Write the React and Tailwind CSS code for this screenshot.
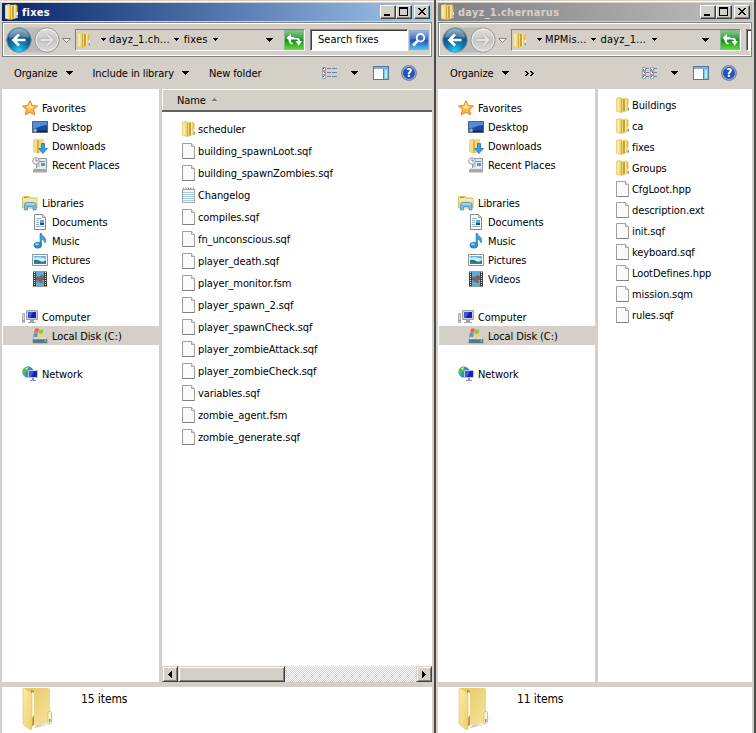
const FAVORITES = [
  { icon: StarIcon, label: "Favorites", root: true },
  { icon: DesktopIcon, label: "Desktop" },
  { icon: DownloadsIcon, label: "Downloads" },
  { icon: RecentIcon, label: "Recent Places" },
];

const LIBRARIES = [
  { icon: LibrariesIcon, label: "Libraries", root: true },
  { icon: DocumentIcon, label: "Documents" },
  { icon: MusicIcon, label: "Music" },
  { icon: PictureIcon, label: "Pictures" },
  { icon: VideoIcon, label: "Videos" },
];

const COMPUTER = [
  { icon: ComputerIcon, label: "Computer", root: true },
  { icon: DiskIcon, label: "Local Disk (C:)", active: true },
];

const NETWORK = [{ icon: NetworkIcon, label: "Network", root: true }];

const FIXES_FILES = [
  "scheduler",
  "building_spawnLoot.sqf",
  "building_spawnZombies.sqf",
  "Changelog",
  "compiles.sqf",
  "fn_unconscious.sqf",
  "player_death.sqf",
  "player_monitor.fsm",
  "player_spawn_2.sqf",
  "player_spawnCheck.sqf",
  "player_zombieAttack.sqf",
  "player_zombieCheck.sqf",
  "variables.sqf",
  "zombie_agent.fsm",
  "zombie_generate.sqf",
];

const MISSION_FILES = [
  "Buildings",
  "ca",
  "fixes",
  "Groups",
  "CfgLoot.hpp",
  "description.ext",
  "init.sqf",
  "keyboard.sqf",
  "LootDefines.hpp",
  "mission.sqm",
  "rules.sqf",
];

function FolderIcon() {
  return (
    <svg width="16" height="16" viewBox="0 0 16 16" className="shrink-0">
      <path d="M0 1 4 0l2 1v14l-2 .8L0 14.500Z" fill="#edd47a" />
      <path d="M1 2h2.500v12H1Z" fill="#f8e9a4" />
      <path d="M5 1.500h1.500v14L5 15.800Z" fill="#cfae45" />
      <path d="M6 1l5-.5 1 1V14l-5 1.500H6Z" fill="#efd676" />
      <path d="M7 2h2v12l-2 .8Z" fill="#c6a237" />
      <path d="M9 2h1v12H9Z" fill="#f9eaa8" />
      <path d="M11 2h1.500v6H13v6h-2Z" fill="#dcbb50" />
      <path d="M11.500 8h1.500v6h-1.500Z" fill="#f9f3cf" />
      <path d="M11.600 11H13v2.500h-1.400Z" fill="#4ea6dc" />
    </svg>
  );
}

function FileIcon() {
  return (
    <svg width="16" height="16" viewBox="0 0 16 16" className="shrink-0">
      <path d="M.5.500h9l3 3v12H.5Z" fill="#fafafa" stroke="#a0a0a0" />
      <path d="M.5 15.500h12" stroke="#808080" />
      <path d="M9.500.5v3h3" fill="#e6e6e6" stroke="#a8a8a8" />
    </svg>
  );
}

function NotepadIcon() {
  return (
    <svg width="16" height="16" viewBox="0 0 16 16" className="shrink-0">
      <path d="M.5 2.500h12v13H.5Z" fill="#f4f8fb" stroke="#a3a8ac" />
      <path d="M1 5.500h11M1 7.500h11M1 9.500h11M1 11.500h11M1 13.500h11" stroke="#a9cbe0" />
      <path d="M1 .5l1 2M3.500.5l1 2M6 .5l1 2M8.500.5l1 2M11 .5l1 2" stroke="#8c8c8c" />
    </svg>
  );
}

function StarIcon() {
  return (
    <svg width="16" height="16" viewBox="0 0 16 16" className="shrink-0">
      <path d="M8 .7 10.200 5.500l5.300.5-4 3.500 1.200 5.400L8 12.100l-4.700 2.800 1.200-5.400L.5 6l5.300-.5Z" fill="#fcb93c" stroke="#e4802a" strokeLinejoin="round" />
      <path d="M8 2.500 9.500 6.300l3.500.4-5 2.300-4-2.400 2.400-.3Z" fill="#ffe58c" />
    </svg>
  );
}

function DesktopIcon() {
  return (
    <svg width="16" height="16" viewBox="0 0 16 16" className="shrink-0">
      <path d="M.5 2.500h15v11H.5Z" fill="#2358b4" stroke="#50617c" />
      <path d="M1 3h14v3L1 9.500Z" fill="#4f8edb" />
      <path d="M1 10c5 0 8-4 14-4v5.500H1Z" fill="#2148a0" />
      <path d="M1 11.500h14V13H1Z" fill="#18253d" />
      <circle cx="3" cy="11.500" r="1.900" fill="#58b6ed" />
      <path d="M2 10h1v1.500H2Z" fill="#f07a3a" />
      <path d="M3 10h1v1.500H3Z" fill="#9ada57" />
    </svg>
  );
}

function DownloadsIcon() {
  return (
    <svg width="16" height="16" viewBox="0 0 16 16" className="shrink-0">
      <path d="M1 1.500 5 .5l2 1.500v13l-2 .5L1 14Z" fill="#f3dc86" />
      <path d="M5 2h2v13H5Z" fill="#d6b547" />
      <path d="M7 1h5v13l-5 1Z" fill="#f1d97e" />
      <path d="M9.500 5.500h3v5h2.800L11 15.500 6.800 10.500h2.700Z" fill="#3b9de4" stroke="#1c6fb7" strokeWidth=".8" />
    </svg>
  );
}

function RecentIcon() {
  return (
    <svg width="16" height="16" viewBox="0 0 16 16" className="shrink-0">
      <path d="M4.500 1.500h10v10h-10Z" fill="#e3eaf0" stroke="#8e979e" />
      <path d="M7 4h6v1H7ZM9 6h4v3H9Z" fill="#4c9bd2" />
      <path d="M5 7h3M5 9h3" stroke="#9fb3c2" />
      <path d="m3 11-2 2v2.500h14V13l-1-2Z" fill="#a3a8ac" />
      <path d="M3 11.500h11" stroke="#e7e9ea" />
      <circle cx="4" cy="4" r="3.300" fill="#f8f8f8" stroke="#9a9a9a" />
      <path d="M4 2v2h2" fill="none" stroke="#666" strokeWidth=".8" />
    </svg>
  );
}

function LibrariesIcon() {
  return (
    <svg width="16" height="16" viewBox="0 0 16 16" className="shrink-0">
      <path d="M.5 2.500 1.500 1.500h6l1 1.500h6.500v10H.5Z" fill="#f3df8d" stroke="#cfae4b" strokeWidth=".8" />
      <path d="M2 2.500h4" stroke="#7cbc4c" />
      <path d="M1 5h14" stroke="#fff6c8" />
      <path d="M2.500 15V10q0-2.500 2.500-2.500h6.500q2.500 0 2.500 2.500v5h-3v-3.500h-5.500V15Z" fill="#73bde8" stroke="#3f8dc0" strokeWidth=".7" />
      <path d="M4 9h9" stroke="#c6e8fa" />
    </svg>
  );
}

function DocumentIcon() {
  return (
    <svg width="16" height="16" viewBox="0 0 16 16" className="shrink-0">
      <path d="M2.500.5h8l3 3v12h-11Z" fill="#fdfdfd" stroke="#85898d" />
      <path d="M10.500.5v3h3" fill="#ddd" stroke="#999" />
      <path d="M4 4.500h5M4 6.500h3M4 8.500h3M4 10.500h3M4 12.500h8" stroke="#99b1c5" />
      <path d="M8 6h4v3H8Z" fill="#5fa8dc" />
      <path d="M8 9h4v2H8Z" fill="#205077" />
    </svg>
  );
}

function MusicIcon() {
  return (
    <svg width="16" height="16" viewBox="0 0 16 16" className="shrink-0">
      <path d="M8 .5h1.500q.3 2 2.500 3.300Q15 6 13 10q-.5-3-3.500-4v6.500H8Z" fill="#3da1dc" stroke="#247ab2" strokeWidth=".6" />
      <ellipse cx="5.800" cy="12.200" rx="3.900" ry="3" fill="#2f91d5" stroke="#1e6ca8" strokeWidth=".6" />
      <ellipse cx="5" cy="11.300" rx="2" ry="1" fill="#94d3f6" />
    </svg>
  );
}

function PictureIcon() {
  return (
    <svg width="16" height="16" viewBox="0 0 16 16" className="shrink-0">
      <path d="M.5 2.500h15v11H.5Z" fill="#fff" stroke="#8b9299" />
      <path d="M2 4h12v8H2Z" fill="#66b7e6" />
      <path d="M2 6q5-2 12 1v3H2Z" fill="#d5effa" />
      <path d="M2 8q3-1 6 1t6-1v4H2Z" fill="#2b7770" />
      <path d="M2 10.500h12V12H2Z" fill="#2687b5" />
    </svg>
  );
}

function VideoIcon() {
  return (
    <svg width="16" height="16" viewBox="0 0 16 16" className="shrink-0">
      <path d="M1 .5h14v15H1Z" fill="#313438" />
      <path d="M4 1h8v6.500H4ZM4 8.500h8V15H4Z" fill="#5aabe2" />
      <path d="m4 7.500 1-2.500 2 1 2-2 3 1v2.500ZM4 10l3-1h3l1 2-2 1-2-1Z" fill="#9a5a3c" />
      <path d="M2.500 1v14M13.500 1v14" stroke="#eee" strokeWidth="1.200" strokeDasharray="1 1" />
    </svg>
  );
}

function ComputerIcon() {
  return (
    <svg width="16" height="16" viewBox="0 0 16 16" className="shrink-0">
      <path d="M.5 4.500h2v9h-2Z" fill="#d8dadb" stroke="#969ca0" strokeWidth=".8" />
      <path d="M1 11h1v1H1Z" fill="#49b549" />
      <path d="M4.500 1.500h11v9h-11Z" fill="#cdd1d4" stroke="#9da2a6" />
      <path d="M6 3h8v6H6Z" fill="#1220b8" />
      <path d="M6 3h5L8 9H6Z" fill="#3e58dc" />
      <path d="M8 11h4v2h2v1H6v-1h2Z" fill="#a2a7ab" />
    </svg>
  );
}

function DiskIcon() {
  return (
    <svg width="16" height="16" viewBox="0 0 16 16" className="shrink-0">
      <path d="m2 9-1.500 2v4.500h15V11L14 9Z" fill="#9ca4aa" />
      <path d="m2.500 9-1.500 2h14l-1.500-2Z" fill="#d5dadd" />
      <path d="M1 11.500h14V15H1Z" fill="#63747e" />
      <path d="M2 12.500h9v1H2Z" fill="#347c96" />
      <path d="M12.500 12h1.500v2h-1.500Z" fill="#50e450" />
      <path d="M3 1q2-1.500 4 0L6 5Q4 3.800 2 5Z" fill="#ef6433" />
      <path d="M7.500 1.300q2 1.200 4 0l-1 4q-2 1-4 0Z" fill="#85c93b" />
      <path d="M1.800 5.600q2-1.400 4 0L5 9.200q-2-1-4 0Z" fill="#4797e3" />
      <path d="M6.300 5.900q2 1.100 4 0l-1 3.700q-2 1-4 0Z" fill="#fbd24c" />
    </svg>
  );
}

function NetworkIcon() {
  return (
    <svg width="16" height="16" viewBox="0 0 16 16" className="shrink-0">
      <circle cx="6" cy="6" r="5.600" fill="#2b8be0" />
      <path d="M1 4q2-4 6-3.500L6 3l1 2-3 1-1 4Q0 8 1 4Z" fill="#4fc143" />
      <path d="M3 2.500 6 1 5 4Z" fill="#c9f2b8" />
      <path d="M6.500 4.500h9v7h-9Z" fill="#1224ba" stroke="#c3c9cd" />
      <path d="M7 5h5l-3 6H7Z" fill="#3c5ce0" />
      <path d="M10 12h2v2h2v1H8v-1h2Z" fill="#8997a3" />
    </svg>
  );
}

function BigFolderIcon() {
  return (
    <svg width="44" height="46" viewBox="0 0 44 46" className="shrink-0">
      <defs>
        <linearGradient id="leaf" x1="0" y1="0" x2="1" y2="1">
          <stop offset="0" stopColor="#fbecA6" />
          <stop offset="1" stopColor="#ecd070" />
        </linearGradient>
        <linearGradient id="body" x1="0" y1="0" x2="1" y2="1">
          <stop offset="0" stopColor="#e6c766" />
          <stop offset="1" stopColor="#f6e39a" />
        </linearGradient>
        <linearGradient id="cast" x1="0" y1="0" x2="1" y2="0">
          <stop offset="0" stopColor="#8a8a8a" />
          <stop offset="1" stopColor="#ffffff" stopOpacity="0" />
        </linearGradient>
      </defs>
      <path d="M12 41 28 24l10 9q2 3-5 4Z" fill="url(#cast)" opacity=".6" />
      <path d="M3 1h23q2 0 2 2v32L11 38.500 3 36Z" fill="url(#body)" />
      <path d="M9 2.500 12 4v34l-3 2Z" fill="#b8963c" />
      <path d="m10 5 2 1v22l-2 3Z" fill="#fffdf0" />
      <path d="M1 1.500Q1 .8 2 1.200L8.500 5q1.500 1 1.500 2.500V41q0 2.500-2 1.500L2.500 38.500Q1 37.500 1 36Z" fill="url(#leaf)" stroke="#dfc163" strokeWidth=".6" />
      <path d="M26 25q2.500-2 3.500 0v10q-1 2-3.500 1.500Z" fill="#fdf8dc" stroke="#dfbf59" />
      <path d="M27 32h1.500v3H27Z" fill="#46a2dd" />
    </svg>
  );
}

function DownArrow({ small }) {
  return small ? (
    <svg width="5" height="3" viewBox="0 0 5 3" className="shrink-0" shapeRendering="crispEdges">
      <path d="M0 0h5v1H4v1H3v1H2V2H1V1H0Z" />
    </svg>
  ) : (
    <svg width="7" height="4" viewBox="0 0 7 4" className="shrink-0" shapeRendering="crispEdges">
      <path d="M0 0h7v1H6v1H5v1H4v1H3V3H2V2H1V1H0Z" />
    </svg>
  );
}

function NavButtons() {
  return (
    <svg width="66" height="28" viewBox="0 0 66 28" className="shrink-0">
      <defs>
        <radialGradient id="back" cx=".5" cy=".95" r=".9">
          <stop offset="0" stopColor="#22d4fa" />
          <stop offset=".4" stopColor="#1179ae" />
          <stop offset=".75" stopColor="#13507c" />
          <stop offset="1" stopColor="#6d9dba" />
        </radialGradient>
        <linearGradient id="fwd" x1="0" y1="0" x2="0" y2="1">
          <stop offset="0" stopColor="#e4e3e0" />
          <stop offset=".5" stopColor="#c6c5c2" />
          <stop offset="1" stopColor="#dedddb" />
        </linearGradient>
      </defs>
      <path d="M14 1.500h28a12.500 12.500 0 0 1 0 25H14Z" fill="#bdbbb7" />
      <circle cx="14" cy="14" r="12.300" fill="url(#back)" stroke="#7b8d98" />
      <path d="M4 12a10 9 0 0 1 20 0q-10-3-20 0Z" fill="#fff" opacity=".3" />
      <path d="M20.500 14H9M14 8.500 8.500 14l5.500 5.500" fill="none" stroke="#fff" strokeWidth="2.700" />
      <circle cx="42" cy="14" r="12.200" fill="url(#fwd)" stroke="#969593" />
      <circle cx="42" cy="14" r="11" fill="none" stroke="#efeeec" />
      <path d="M35.500 14H47M42 8.500l5.500 5.500-5.500 5.500" fill="none" stroke="#b4b3b0" strokeWidth="3.600" />
      <path d="M35.500 14H47M42 8.500l5.500 5.500-5.500 5.500" fill="none" stroke="#e6e5e3" strokeWidth="2" />
      <path d="M57.500 12.500h8l-4 4Z" fill="#f4f4f4" stroke="#858585" />
    </svg>
  );
}

function RefreshButton() {
  return (
    <svg width="20" height="20" viewBox="0 0 20 20" className="shrink-0">
      <defs>
        <linearGradient id="green" x1="0" y1="0" x2="0" y2="1">
          <stop offset="0" stopColor="#86c98a" />
          <stop offset=".45" stopColor="#2f9a3a" />
          <stop offset=".5" stopColor="#118c1c" />
          <stop offset="1" stopColor="#5fdc3c" />
        </linearGradient>
      </defs>
      <path d="M.5.5h19v19H.5Z" fill="url(#green)" stroke="#88b78c" />
      <path d="M7 4v3h3.500l-1 2.500H7V12L2.500 8Z" fill="#fff" />
      <path d="M6 9.500q0 3 3 3.500l-1 1.500Q4.500 13 4.500 9.500Z" fill="#fff" />
      <path d="M10 8h3.500q2.500 0 2.500 3h2l-3.300 4.800L11.500 11H14q0-1.500-1.500-1.500H10Z" fill="#fff" />
    </svg>
  );
}

function SearchButton() {
  return (
    <svg width="20" height="20" viewBox="0 0 20 20" className="shrink-0">
      <defs>
        <linearGradient id="blue" x1="0" y1="0" x2="0" y2="1">
          <stop offset="0" stopColor="#9db9e4" />
          <stop offset=".45" stopColor="#3f6fc4" />
          <stop offset=".5" stopColor="#1f51b4" />
          <stop offset="1" stopColor="#43c6f6" />
        </linearGradient>
      </defs>
      <path d="M.5.5h19v19H.5Z" fill="url(#blue)" stroke="#8fa8cd" />
      <circle cx="11.500" cy="7.800" r="3.800" fill="#3e74cc" stroke="#fff" strokeWidth="1.800" />
      <path d="m8.500 11-4.500 4.500" stroke="#fff" strokeWidth="2.600" />
    </svg>
  );
}

function ViewIcon({ list }) {
  return (
    <svg width="16" height="13" viewBox="0 0 16 13" className="shrink-0" shapeRendering="crispEdges">
      <path d="M0 0h4v12H0Z" fill="#8fa3b8" />
      <path d="M1 1h2v2H1ZM1 5h2v2H1ZM1 9h2v2H1Z" fill="#fff" />
      {list ? (
        <>
          <path d="M8 0h4v12H8Z" fill="#8fa3b8" />
          <path d="M9 1h2v2H9ZM9 5h2v2H9ZM9 9h2v2H9Z" fill="#fff" />
          <path d="M4 1h3v1H4ZM4 5h3v1H4ZM4 9h3v1H4ZM12 1h3v1h-3ZM12 5h3v1h-3ZM12 9h3v1h-3Z" fill="#6f8299" />
          <path d="M1 2h1v1H1ZM9 2h1v1H9Z" fill="#2f9a45" />
          <path d="M2 5h1v1H2ZM10 5h1v1h-1Z" fill="#d22" />
          <path d="M1 9h1v1H1ZM9 9h1v1H9Z" fill="#2b55c0" />
        </>
      ) : (
        <>
          <path d="M1 1h1v1H1ZM1 9h1v1H1Z" fill="#4d6f9f" />
          <path d="M2 5h1v1H2Z" fill="#d22" />
          <path d="M5 1h4v1H5ZM10 1h5v1h-5ZM5 5h4v1H5ZM10 5h5v1h-5ZM5 9h4v1H5ZM10 9h5v1h-5Z" fill="#6f8299" />
        </>
      )}
    </svg>
  );
}

function PreviewIcon() {
  return (
    <svg width="16" height="14" viewBox="0 0 16 14" className="shrink-0" shapeRendering="crispEdges">
      <path d="M.5.5h15v13H.5Z" fill="#fff" stroke="#53789f" />
      <path d="M1 1h14v2H1Z" fill="#8badcf" />
      <path d="M10 3h5v10h-5Z" fill="#7dcbe8" />
      <path d="M10.500 3v10" stroke="#4b86ab" />
      <path d="M12 4h2v8h-2Z" fill="#b8e6f5" />
    </svg>
  );
}

function HelpIcon() {
  return (
    <span className="flex size-4 shrink-0 items-center justify-center rounded-full border border-[#7d8aa8] bg-[#2850b4] text-[12px] font-bold leading-none text-white shadow-[inset_0_0_0_1px_#a3b5dd]">
      ?
    </span>
  );
}

function CaptionButton({ children, className = "" }) {
  return (
    <span
      className={`flex h-[14px] w-4 border border-t-white border-l-white border-r-[#404040] border-b-[#404040] bg-[#d4d0c8] shadow-[inset_-1px_-1px_0_#808080] ${className}`}
    >
      <svg width="14" height="12" viewBox="0 0 14 12" shapeRendering="crispEdges">
        {children}
      </svg>
    </span>
  );
}

function TitleBar({ title, active }) {
  return (
    <div
      className={`flex h-[18px] items-center bg-linear-to-r pr-[2px] ${
        active ? "from-[#0a246a] to-[#a6caf0] text-white" : "from-[#808080] to-[#c0c0c0] text-[#d4d0c8]"
      }`}
    >
      <span className="ml-[3px] flex">
        <FolderIcon />
      </span>
      <span className="ml-px flex-1 pt-px text-[11px] font-bold tracking-[0.25px]">{title}</span>
      <CaptionButton>
        <path d="M3 8h6v2H3Z" />
      </CaptionButton>
      <CaptionButton>
        <path d="M2 1h9v9H2ZM3 3v6h7V3Z" fillRule="evenodd" />
      </CaptionButton>
      <CaptionButton className="ml-[2px]">
        <path d="M3 2h2v1h1v1h2V3h1V2h2v1h-1v1H9v1H8v1h1v1h1v1h1v1H9V8H8V7H6v1H5v1H3V8h1V7h1V6h1V5H5V4H4V3H3Z" />
      </CaptionButton>
    </div>
  );
}

function AddressBar({ first, second, search }) {
  return (
    <div className="mt-px flex h-[35px] items-center overflow-hidden border border-[#808080] shadow-[inset_1px_1px_0_#fff,inset_-1px_-1px_0_#fff]">
      <span className="ml-[2px] flex">
        <NavButtons />
      </span>
      <div className="ml-1 flex h-[22px] w-[230px] shrink-0 items-center border border-[#808080] border-r-white border-b-white tracking-[0.15px]">
        <span className="ml-px flex">
          <FolderIcon />
        </span>
        <span className="ml-2">
          <DownArrow small />
        </span>
        <span className="ml-[3px]">{first}</span>
        <span className="ml-1">
          <DownArrow small />
        </span>
        <span className="ml-[5px]">{second}</span>
        <span className="ml-[6px]">
          <DownArrow small />
        </span>
        <span className="ml-auto mr-[11px]">
          <DownArrow />
        </span>
        <RefreshButton />
      </div>
      <div className="ml-[5px] flex h-[22px] w-[98px] shrink-0 items-center border border-[#808080] border-r-white border-b-white bg-white pl-[7px] tracking-[0.05px] shadow-[inset_1px_1px_0_#404040]">
        <span className="pt-px">{search}</span>
      </div>
      <span className="ml-px flex">
        <SearchButton />
      </span>
    </div>
  );
}

function NavGroup({ items }) {
  return (
    <ul className="mb-[19px]">
      {items.map(({ icon: Icon, label, root, active }) => (
        <li
          key={label}
          className={`ml-px flex h-[19px] items-center gap-1 ${root ? "pl-[19px]" : "pl-[29px]"} ${
            active ? "bg-[#d4d0c8]" : ""
          }`}
        >
          <Icon />
          <span className="pt-[2px]">{label}</span>
        </li>
      ))}
    </ul>
  );
}

function FileRow({ name, className }) {
  const Icon = name === "Changelog" ? NotepadIcon : name.includes(".") ? FileIcon : FolderIcon;
  return (
    <li className={`flex items-center ${className}`}>
      <Icon />
      <span className="pt-[2px]">{name}</span>
    </li>
  );
}

function ScrollButton({ children, className = "" }) {
  return (
    <span
      className={`flex h-4 shrink-0 items-center justify-center border border-t-[#d4d0c8] border-l-[#d4d0c8] border-r-[#404040] border-b-[#404040] bg-[#d4d0c8] shadow-[inset_1px_1px_0_#fff,inset_-1px_-1px_0_#808080] ${className}`}
    >
      {children}
    </span>
  );
}

function ScrollBar() {
  return (
    <div className="mt-auto flex bg-[repeating-conic-gradient(#d4d0c8_0_25%,#fff_0_50%)] bg-[length:2px_2px]">
      <ScrollButton className="w-4">
        <svg width="4" height="7" viewBox="0 0 4 7" shapeRendering="crispEdges">
          <path d="M4 0v7H3V6H2V5H1V4H0V3h1V2h1V1h1V0Z" />
        </svg>
      </ScrollButton>
      <ScrollButton className="w-[107px]" />
      <ScrollButton className="ml-auto w-4">
        <svg width="4" height="7" viewBox="0 0 4 7" shapeRendering="crispEdges">
          <path d="M0 0v7h1V6h1V5h1V4h1V3H3V2H2V1H1V0Z" />
        </svg>
      </ScrollButton>
    </div>
  );
}

function ExplorerWindow({ title, active, address, toolbar, list, children, count, className }) {
  return (
    <section className={`flex flex-col border-r-2 border-[#4a4a4a] bg-[#d4d0c8] pl-[2px] pr-[2px] ${className}`}>
      <div className="-mx-[2px] mt-px mb-px h-px bg-white" />
      <TitleBar title={title} active={active} />
      {address}
      <div className="flex h-8 items-center pl-3">
        <span className="pt-px">Organize</span>
        <span className="ml-2">
          <DownArrow />
        </span>
        {toolbar}
        <span className="ml-auto">
          <ViewIcon list={list} />
        </span>
        <span className="ml-[13px]">
          <DownArrow />
        </span>
        <span className="ml-[15px]">
          <PreviewIcon />
        </span>
        <span className="ml-3 mr-[15px]">
          <HelpIcon />
        </span>
      </div>
      <div className="flex h-[593px] gap-[3px]">
        <nav className="w-[157px] shrink-0 bg-white pt-[9px]">
          <NavGroup items={FAVORITES} />
          <NavGroup items={LIBRARIES} />
          <NavGroup items={COMPUTER} />
          <NavGroup items={NETWORK} />
        </nav>
        <div className="flex min-w-0 flex-1 flex-col bg-white">{children}</div>
      </div>
      <footer className="mt-[5px] flex h-[46px] bg-white pl-5">
        <BigFolderIcon />
        <span className="ml-[15px] mt-[5px] text-[12px]">{count}</span>
      </footer>
    </section>
  );
}

export default function App() {
  return (
    <main className="flex h-[733px] w-[756px] overflow-hidden whitespace-nowrap bg-[#d4d0c8] font-['DejaVu_Sans_Condensed','DejaVu_Sans',sans-serif] text-[11px] leading-[14px] tracking-[-0.1px] text-black [font-stretch:condensed] [&_span>svg]:block">
      <ExplorerWindow
        className="w-[436px]"
        title="fixes"
        active
        count="15 items"
        address={<AddressBar first="dayz_1.ch..." second="fixes" search="Search fixes" />}
        toolbar={
          <>
            <span className="ml-5 pt-px">Include in library</span>
            <span className="ml-2">
              <DownArrow />
            </span>
            <span className="ml-5 pt-px">New folder</span>
          </>
        }
      >
        <div className="flex h-[23px] items-center border-b-2 border-[#606060] bg-[#d4d0c8] pl-[15px] pt-[2px] shadow-[inset_1px_1px_0_#fff]">
          Name
          <svg width="5" height="3" viewBox="0 0 5 3" className="mb-[3px] ml-[6px]" shapeRendering="crispEdges">
            <path d="M2 0h1v1h1v1h1v1H0V2h1V1h1Z" fill="#808080" />
          </svg>
        </div>
        <ul className="pl-5 pt-[6px]">
          {FIXES_FILES.map((name) => (
            <FileRow key={name} name={name} className="h-[22px]" />
          ))}
        </ul>
        <ScrollBar />
      </ExplorerWindow>
      <ExplorerWindow
        className="w-[320px]"
        title="dayz_1.chernarus"
        list
        count="11 items"
        address={<AddressBar first="MPMis..." second="dayz_1..." />}
        toolbar={
          <svg width="9" height="5" viewBox="0 0 9 5" className="ml-4" shapeRendering="crispEdges">
            <path d="M0 0h2v1h1v1h1v1H3v1H2v1H0V4h1V3h1V2H1V1H0ZM5 0h2v1h1v1h1v1H8v1H7v1H5V4h1V3h1V2H6V1H5Z" />
          </svg>
        }
      >
        <ul className="pl-[18px] pt-[5px]">
          {MISSION_FILES.map((name) => (
            <FileRow key={name} name={name} className="h-[21px]" />
          ))}
        </ul>
      </ExplorerWindow>
    </main>
  );
}
